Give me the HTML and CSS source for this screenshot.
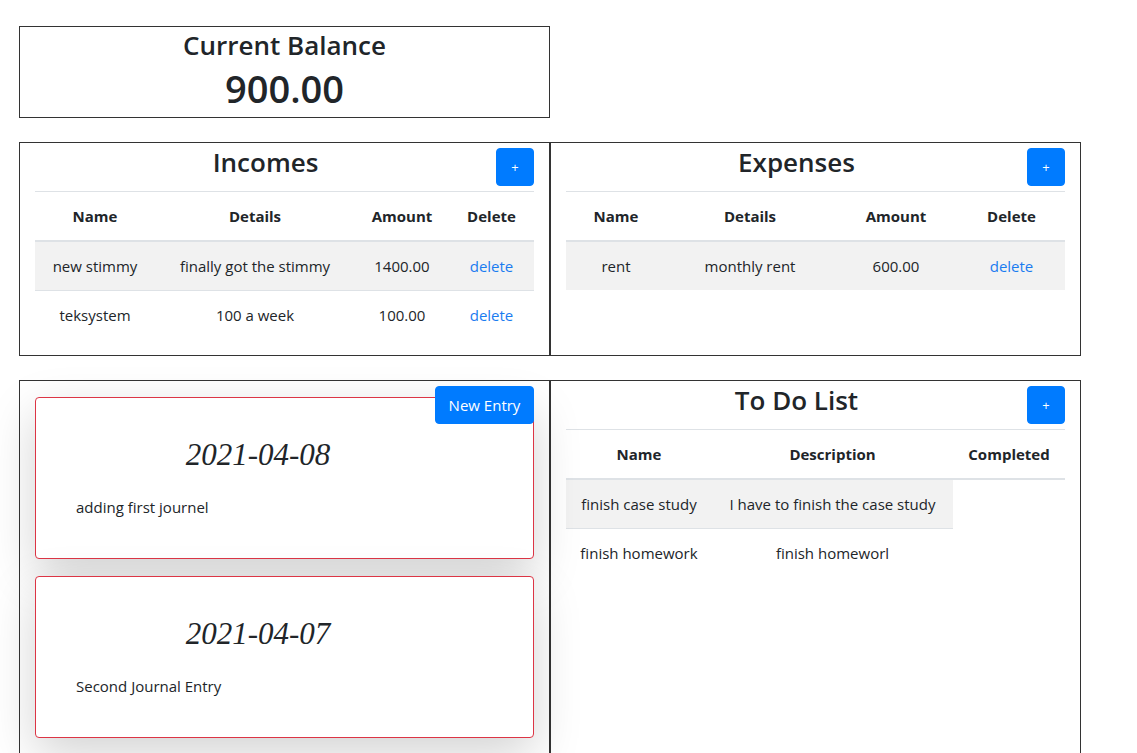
FILE: index.html
```html
<!DOCTYPE html>
<html lang="en">
<head>
<meta charset="utf-8">
<title>Budget Dashboard</title>
<link rel="stylesheet" href="styles.css">
</head>
<body>
<div class="page">
  <section class="balance">
    <h3 class="balance-title">Current Balance</h3>
    <h1 class="balance-value">900.00</h1>
  </section>

  <div class="row">
    <section class="panel">
      <div class="panel-head">
        <h3 class="panel-title">Incomes</h3>
        <button class="btn btn-square">+</button>
      </div>
      <table class="tbl tbl-striped">
        <thead>
          <tr><th class="inc-c1">Name</th><th class="inc-c2">Details</th><th class="inc-c3">Amount</th><th class="inc-c4">Delete</th></tr>
        </thead>
        <tbody>
          <tr><td>new stimmy</td><td>finally got the stimmy</td><td>1400.00</td><td><a class="link" href="#">delete</a></td></tr>
          <tr><td>teksystem</td><td>100 a week</td><td>100.00</td><td><a class="link" href="#">delete</a></td></tr>
        </tbody>
      </table>
    </section>
    <section class="panel">
      <div class="panel-head">
        <h3 class="panel-title">Expenses</h3>
        <button class="btn btn-square">+</button>
      </div>
      <table class="tbl tbl-striped">
        <thead>
          <tr><th class="exp-c1">Name</th><th class="exp-c2">Details</th><th class="exp-c3">Amount</th><th class="exp-c4">Delete</th></tr>
        </thead>
        <tbody>
          <tr><td>rent</td><td>monthly rent</td><td>600.00</td><td><a class="link" href="#">delete</a></td></tr>
        </tbody>
      </table>
    </section>
  </div>

  <div class="row">
    <section class="panel journal">
      <button class="btn btn-entry">New Entry</button>
      <div class="card">
        <h3 class="card-date">2021-04-08</h3>
        <p class="card-text">adding first journel</p>
      </div>
      <div class="card">
        <h3 class="card-date">2021-04-07</h3>
        <p class="card-text">Second Journal Entry</p>
      </div>
    </section>
    <section class="panel">
      <div class="panel-head">
        <h3 class="panel-title">To Do List</h3>
        <button class="btn btn-square">+</button>
      </div>
      <table class="tbl tbl-striped">
        <thead>
          <tr><th class="todo-c1">Name</th><th class="todo-c2">Description</th><th class="todo-c3">Completed</th></tr>
        </thead>
        <tbody>
          <tr><td>finish case study</td><td>I have to finish the case study</td></tr>
          <tr><td>finish homework</td><td>finish homeworl</td></tr>
        </tbody>
      </table>
    </section>
  </div>
</div>
</body>
</html>
```

FILE: styles.css
```css
* { box-sizing: border-box; }

html, body {
  margin: 0;
  padding: 0;
  background: #fff;
}

body {
  font-family: "Open Sans", "Noto Sans", "Liberation Sans", sans-serif;
  font-size: 15px;
  line-height: 24px;
  color: #212529;
}

.page {
  padding: 26px 0 0 19px;
}

.balance {
  width: 531px;
  border: 1px solid #333;
  padding: 1px 0 5px;
  text-align: center;
}

.balance-title {
  margin: 0;
  font-size: 26px;
  line-height: 34px;
  font-weight: 600;
}

.balance-value {
  margin: 2px 0 0;
  font-size: 38px;
  line-height: 48px;
  font-weight: 600;
}

.row {
  display: flex;
  margin-top: 24px;
}

.panel {
  width: 531px;
  border: 1px solid #333;
  padding: 5px 15px 16px;
}

.panel-head {
  display: flex;
  align-items: flex-start;
  margin-bottom: 5px;
}

.panel-title {
  flex: 1;
  margin: 0;
  text-align: center;
  font-size: 26px;
  line-height: 28px;
  font-weight: 600;
}

.btn {
  border: 1px solid #007bff;
  background: #007bff;
  color: #fff;
  border-radius: 4px;
  font-family: inherit;
  cursor: pointer;
}

.btn-square {
  width: 38px;
  height: 38px;
  padding: 0;
  font-size: 13px;
  line-height: 36px;
}

.tbl {
  width: 100%;
  border-collapse: collapse;
  table-layout: fixed;
}

.tbl th,
.tbl td {
  padding: 12px 0;
  text-align: center;
  border-top: 1px solid #dee2e6;
  line-height: 24px;
  white-space: nowrap;
}

.tbl th {
  font-weight: 700;
  border-bottom: 2px solid #dee2e6;
}

.tbl-striped tbody tr:nth-child(odd) td {
  background: #f2f2f2;
}

.link {
  color: #1a7cf0;
  text-decoration: none;
}

.inc-c1 { width: 120px; }
.inc-c2 { width: 200px; }
.inc-c3 { width: 94px; }
.inc-c4 { width: 85px; }

.exp-c1 { width: 100px; }
.exp-c2 { width: 168px; }
.exp-c3 { width: 124px; }
.exp-c4 { width: 107px; }

.todo-c1 { width: 146px; }
.todo-c2 { width: 241px; }
.todo-c3 { width: 112px; }

.journal {
  position: relative;
  padding: 16px 15px 40px;
}

.btn-entry {
  position: absolute;
  top: 5px;
  right: 15px;
  z-index: 2;
  height: 38px;
  width: 99px;
  padding: 0;
  font-size: 15px;
  line-height: 36px;
}

.card {
  border: 1px solid #dc3545;
  border-radius: 4px;
  background: #fff;
  box-shadow: 0 16px 48px rgba(0, 0, 0, 0.175);
  padding: 39px 93px 39px 40px;
  margin-bottom: 17px;
}

.card-date {
  margin: 0 0 22px;
  text-align: center;
  font-family: "Liberation Serif", "DejaVu Serif", serif;
  font-style: italic;
  font-weight: 400;
  font-size: 31px;
  line-height: 36px;
}

.card-text {
  margin: 0;
  font-size: 15px;
  line-height: 24px;
}
```
